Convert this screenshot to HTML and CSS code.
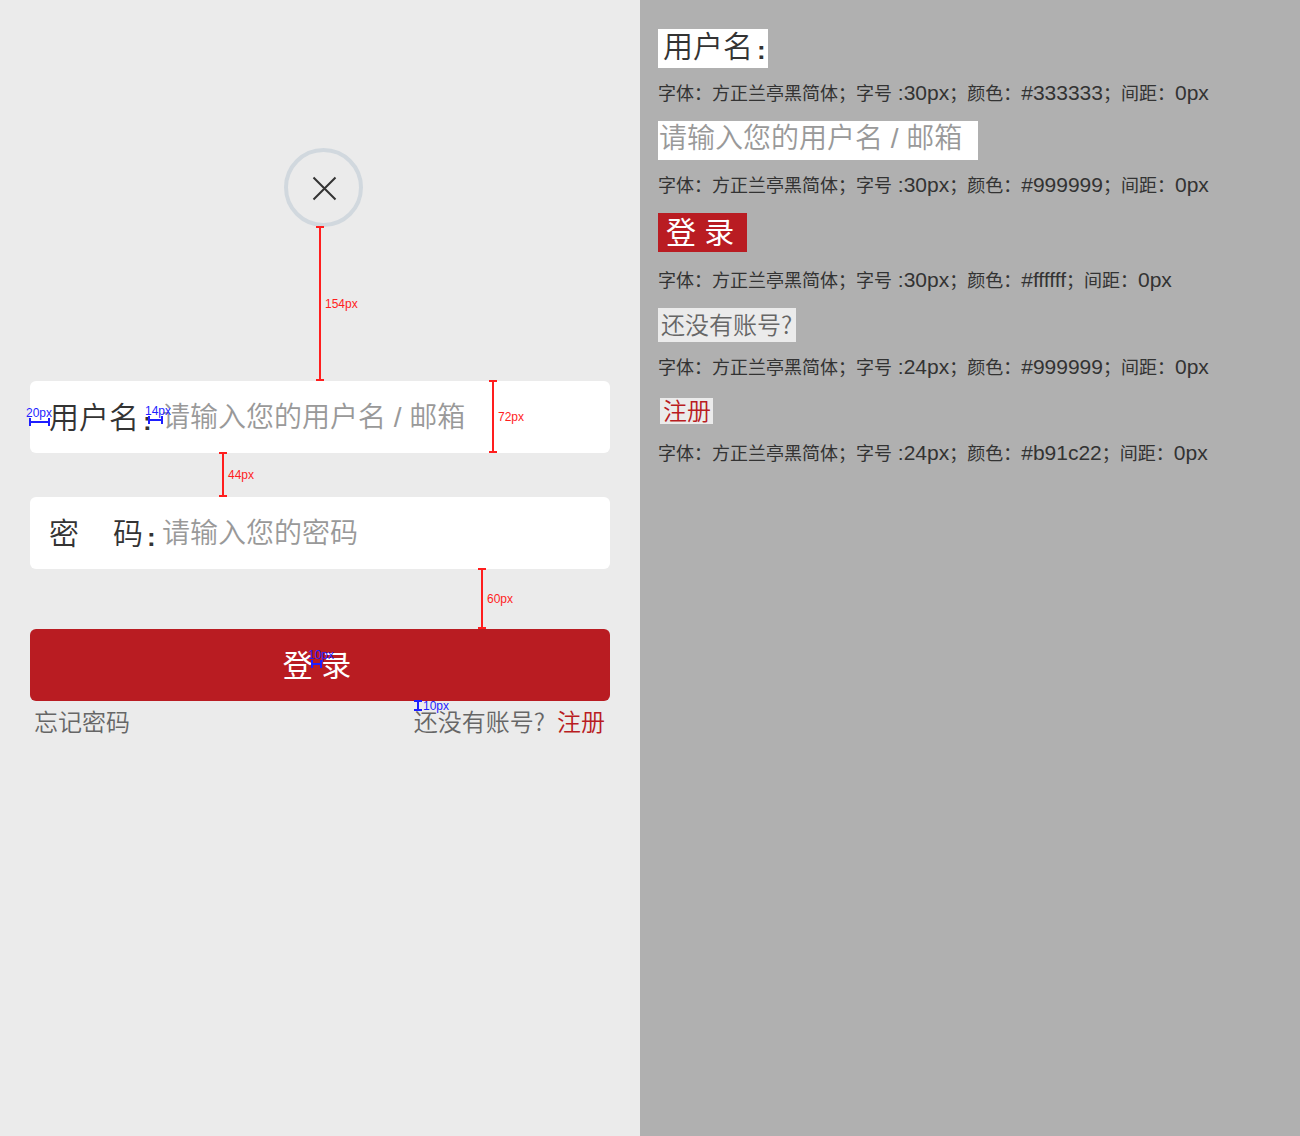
FILE: index.html
```html
<!DOCTYPE html>
<html lang="zh-CN">
<head>
<meta charset="utf-8">
<meta name="viewport" content="width=device-width, initial-scale=1">
<title>登录</title>
<link rel="stylesheet" href="styles.css">
</head>
<body>
<div class="board">
  <main class="screen">
    <div class="close-row">
      <button class="close" type="button" aria-label="关闭">
        <svg viewBox="0 0 79 79" width="79" height="79" aria-hidden="true">
          <circle cx="39.5" cy="39.5" r="37.5" fill="none" stroke="#d1d8de" stroke-width="4"/>
          <path d="M29.5 29.5 51.5 51.5M51.5 29.5 29.5 51.5" fill="none" stroke="#333" stroke-width="2"/>
        </svg>
      </button>
      <div class="measure vertical m-154"><span>154px</span></div>
    </div>
    <form class="form">
      <div class="field">
        <label class="label" for="user"><span>用户名<b>:</b></span></label>
        <input class="input" id="user" type="text" placeholder="请输入您的用户名 / 邮箱">
        <div class="measure horizontal blue m-20"><span>20px</span></div>
        <div class="measure horizontal blue m-14"><span>14px</span></div>
        <div class="measure vertical m-72"><span>72px</span></div>
        <div class="measure vertical m-44"><span>44px</span></div>
      </div>
      <div class="field">
        <label class="label" for="pass"><span>密</span><span>码<b>:</b></span></label>
        <input class="input" id="pass" type="password" placeholder="请输入您的密码">
        <div class="measure vertical m-60"><span>60px</span></div>
      </div>
      <div class="submit-row">
        <button class="submit" type="submit">登 录</button>
        <div class="measure horizontal blue m-10h"><span>10px</span></div>
        <div class="measure vertical blue m-10v"><span>10px</span></div>
      </div>
      <div class="links">
        <a class="forgot" href="#forgot">忘记密码</a>
        <p class="join">还没有账号?<a class="register" href="#register">注册</a></p>
      </div>
    </form>
  </main>
  <aside class="specs">
    <dl class="spec">
      <dt class="chip chip-label">用户名<b>:</b></dt>
      <dd class="note">字体：方正兰亭黑简体；字号<i> :30px</i>；颜色：<i>#333333</i>；间距：<i>0px</i></dd>
    </dl>
    <dl class="spec">
      <dt class="chip chip-hint">请输入您的用户名 / 邮箱</dt>
      <dd class="note">字体：方正兰亭黑简体；字号<i> :30px</i>；颜色：<i>#999999</i>；间距：<i>0px</i></dd>
    </dl>
    <dl class="spec">
      <dt class="chip chip-submit">登 录</dt>
      <dd class="note">字体：方正兰亭黑简体；字号<i> :30px</i>；颜色：<i>#ffffff</i>；间距：<i>0px</i></dd>
    </dl>
    <dl class="spec">
      <dt class="chip chip-join">还没有账号?</dt>
      <dd class="note">字体：方正兰亭黑简体；字号<i> :24px</i>；颜色：<i>#999999</i>；间距：<i>0px</i></dd>
    </dl>
    <dl class="spec">
      <dt class="chip chip-register">注册</dt>
      <dd class="note">字体：方正兰亭黑简体；字号<i> :24px</i>；颜色：<i>#b91c22</i>；间距：<i>0px</i></dd>
    </dl>
  </aside>
</div>
</body>
</html>
```
FILE: styles.css
```css
* { box-sizing: border-box; margin: 0; padding: 0; }

body {
  font-family: "Noto Sans CJK SC", sans-serif;
  font-weight: 350;
  color: #333;
}

.board {
  display: grid;
  grid-template-columns: 640fr 660fr;
  min-height: 100vh;
}

.screen { background: #ebebeb; padding: 148px 30px 40px; }

.close-row {
  position: relative;
  display: flex;
  justify-content: center;
  padding-left: 7px;
  margin-bottom: 154px;
}

.close { display: block; border: 0; background: none; cursor: pointer; }
.close svg { display: block; }

.field {
  position: relative;
  display: flex;
  align-items: center;
  height: 72px;
  padding-left: 19px;
  margin-bottom: 44px;
  background: #fff;
  border-radius: 6px;
}

.label {
  display: flex;
  gap: 34px;
  width: 113px;
  font-size: 30px;
  line-height: 44px;
  padding-bottom: 4px;
  white-space: nowrap;
}

.label b, .chip b {
  padding-left: 4px;
  font-family: "Liberation Sans", sans-serif;
  font-size: 26px;
  font-weight: 700;
  line-height: 20px;
  vertical-align: -2px;
}

.input {
  flex: 1;
  min-width: 0;
  height: 72px;
  padding-top: 2px;
  border: 0;
  outline: 0;
  background: none;
  font-family: "Liberation Sans", "Noto Sans CJK SC", sans-serif;
  font-weight: 350;
  font-size: 28px;
  color: #333;
}

.input::placeholder { color: #999; opacity: 1; }

.submit-row { position: relative; margin-top: 60px; }

.submit {
  display: block;
  width: 100%;
  height: 72px;
  padding: 0 6px 4px 0;
  border: 0;
  border-radius: 6px;
  background: #b91c22;
  color: #fff;
  font-family: "Liberation Sans", "Noto Sans CJK SC", sans-serif;
  font-weight: 400;
  font-size: 30px;
  cursor: pointer;
}

.links {
  display: flex;
  justify-content: space-between;
  padding: 2px 5px 0 4px;
  font-size: 24px;
  line-height: 36px;
  color: #666;
}

.links a { text-decoration: none; }
.forgot { color: #666; }
.links .register { color: #b91c22; margin-left: 12px; }

/* Dimension marks: a bar with two end caps and a caption */
.measure {
  position: absolute;
  color: #ff1e1e;
  font-family: "Liberation Sans", sans-serif;
  font-weight: 400;
  font-size: 12px;
  line-height: 14px;
  pointer-events: none;
}

.measure.blue { color: #1e1eff; }

.vertical {
  display: flex;
  align-items: center;
  width: 8px;
  border-top: 2px solid;
  border-bottom: 2px solid;
  background: linear-gradient(currentColor, currentColor) center / 2px 100% no-repeat;
}

.vertical span { margin-left: 9px; }

.horizontal {
  height: 8px;
  border-left: 2px solid;
  border-right: 2px solid;
  background: linear-gradient(currentColor, currentColor) center / 100% 2px no-repeat;
}

.horizontal span { position: absolute; bottom: 6px; left: -5px; }

.m-154 { top: 78px; bottom: -154px; left: calc(50% - 4px); }
.m-72 { top: -1px; bottom: 0; left: 459px; }
.m-44 { top: 71px; bottom: -44px; left: 189px; }
.m-60 { top: 71px; bottom: -60px; left: 448px; }
.m-20 { top: 37px; left: -1px; width: 21px; }
.m-14 { top: 35px; left: 118px; width: 15px; }
.m-10h { top: 31px; left: calc(50% - 9px); width: 11px; }
.m-10v { top: 71px; left: 384px; height: 11px; }

.specs {
  display: flex;
  flex-direction: column;
  gap: 17px;
  padding: 29px 18px;
  background: #b0b0b0;
}

.chip {
  width: max-content;
  margin-bottom: 12px;
  font-size: 30px;
  line-height: 30px;
  height: 39px;
  background: #fff;
}

.chip-label { padding: 0 2px 0 5px; }

.chip-hint {
  padding: 0 16px 0 1px;
  font-family: "Liberation Sans", "Noto Sans CJK SC", sans-serif;
  font-size: 28px;
  line-height: 36px;
  color: #999;
}

.chip-submit {
  padding: 0 13px 0 8px;
  margin-bottom: 15px;
  font-family: "Liberation Sans", "Noto Sans CJK SC", sans-serif;
  font-weight: 400;
  line-height: 39px;
  background: #b91c22;
  color: #fff;
}

.chip-join, .chip-register { font-size: 24px; background: #ebebeb; }
.chip-join { height: 34px; line-height: 32px; padding: 0 4px 0 3px; color: #666; }

.chip-register {
  height: 26px;
  line-height: 24px;
  margin: 3px 0 16px 2px;
  padding: 0 2px 0 3px;
  color: #b91c22;
}

.note {
  font-size: 18px;
  line-height: 24px;
  font-weight: 400;
}

.note i {
  font-family: "Liberation Sans", sans-serif;
  font-style: normal;
  font-size: 21px;
  line-height: 20px;
  white-space: pre;
}
```
